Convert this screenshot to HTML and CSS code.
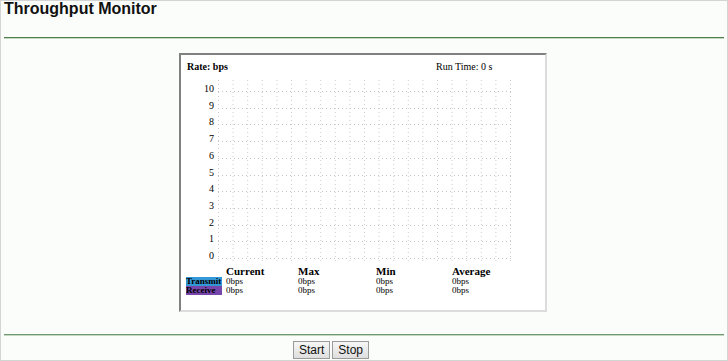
FILE: index.html
```html
<!DOCTYPE html>
<html>
<head>
  <title>Throughput Monitor</title>
  <link rel="stylesheet" href="styles.css">
</head>
<body>
  <div class="page">
    <h1>Throughput Monitor</h1>
    <div class="rule"></div>

    <div class="monitor">
      <div class="monitor-head">
        <span class="rate">Rate: bps</span>
        <span class="runtime">Run Time: 0 s</span>
      </div>

      <svg class="chart" width="364" height="188" viewBox="0 0 364 188">
        <g class="grid-v" id="gridV"></g>
        <g class="grid-h" id="gridH"></g>
        <g class="axis" id="axis"></g>
      </svg>

      <table class="legend">
        <thead>
          <tr><th class="key-col"></th><th>Current</th><th>Max</th><th>Min</th><th>Average</th></tr>
        </thead>
        <tbody>
          <tr><td><span class="key transmit">Transmit</span></td><td>0bps</td><td>0bps</td><td>0bps</td><td>0bps</td></tr>
          <tr><td><span class="key receive">Receive</span></td><td>0bps</td><td>0bps</td><td>0bps</td><td>0bps</td></tr>
        </tbody>
      </table>
    </div>

    <div class="rule rule-bottom"></div>
    <div class="actions">
      <button class="btn">Start</button>
      <button class="btn">Stop</button>
    </div>
  </div>

  <script>
    const ns = 'http://www.w3.org/2000/svg';
    const gridV = document.getElementById('gridV');
    const gridH = document.getElementById('gridH');
    const axis = document.getElementById('axis');

    // vertical dotted lines
    for (let i = 0; i <= 20; i++) {
      const x = 37.5 + i * 14.6;
      const l = document.createElementNS(ns, 'line');
      l.setAttribute('x1', x); l.setAttribute('x2', x);
      l.setAttribute('y1', 3); l.setAttribute('y2', 185);
      gridV.appendChild(l);
    }

    // horizontal lines + y labels, 10 at top
    for (let v = 10; v >= 0; v--) {
      const y = Math.round(14 + (10 - v) * 16.7) + 0.5;
      const l = document.createElementNS(ns, 'line');
      l.setAttribute('x1', 37); l.setAttribute('x2', 330);
      l.setAttribute('y1', y); l.setAttribute('y2', y);
      gridH.appendChild(l);

      const t = document.createElementNS(ns, 'text');
      t.setAttribute('x', 33);
      t.setAttribute('y', y);
      t.textContent = v;
      axis.appendChild(t);
    }
  </script>
</body>
</html>
```

FILE: styles.css
```css
body {
  margin: 0;
  font-family: "Liberation Sans", Arial, sans-serif;
}
.page {
  box-sizing: border-box;
  height: 361px;
  border: 1px solid #d4d4d4;
  background-color: #fbfdfb;
}
h1 {
  margin: 0;
  padding: 0 3px;
  font-size: 16px;
  line-height: 16px;
  font-weight: bold;
  color: #111;
}
.rule {
  margin: 20px 3px 0;
  border-top: 1px solid #4f7f4f;
  border-bottom: 1px solid #c4d8c4;
}
.rule-bottom {
  margin-top: 22px;
  border-top-color: #6f9a6f;
}
.monitor {
  box-sizing: border-box;
  width: 368px;
  height: 259px;
  margin: 14px 0 0 178px;
  border: 2px solid;
  border-color: #808080 #dcdcdc #dcdcdc #808080;
  background-color: #fff;
  font-family: "Liberation Serif", "Times New Roman", serif;
  color: #000;
}
.monitor-head {
  display: flex;
  height: 22px;
  align-items: center;
  padding: 0 0 0 6px;
  font-size: 10px;
}
.rate {
  font-weight: bold;
  width: 249px;
}
.chart {
  display: block;
}
.grid-v line,
.grid-h line {
  stroke: #c4c4c4;
  stroke-width: 1;
  stroke-dasharray: 1 3;
}
.grid-v line {
  stroke: #cccccc;
}
.axis text {
  font-family: "Liberation Serif", "Times New Roman", serif;
  font-size: 10px;
  text-anchor: end;
  fill: #000;
}
.legend {
  border-collapse: collapse;
  margin-left: 5px;
  font-size: 9px;
}
.legend th,
.legend td {
  padding: 0;
  text-align: left;
  vertical-align: top;
}
.legend th {
  font-size: 11px;
  line-height: 12px;
  font-weight: bold;
}
.legend td {
  line-height: 9px;
}
.legend th:nth-child(1) { width: 40px; }
.legend th:nth-child(2) { width: 72px; }
.legend th:nth-child(3) { width: 78px; }
.legend th:nth-child(4) { width: 76px; }
.key {
  display: block;
  width: 36px;
  font-weight: bold;
  color: #000;
}
.transmit {
  background-color: #3497d6;
}
.receive {
  background-color: #7746aa;
}
.actions {
  padding: 5px 0 0 292px;
  display: flex;
  gap: 2px;
}
.btn {
  height: 18px;
  padding: 0 5px;
  font-family: "Liberation Sans", Arial, sans-serif;
  font-size: 12px;
  color: #111;
  background: linear-gradient(#f6f6f6, #dedede);
  border: 1px solid #9a9a9a;
  border-radius: 0;
}
```
